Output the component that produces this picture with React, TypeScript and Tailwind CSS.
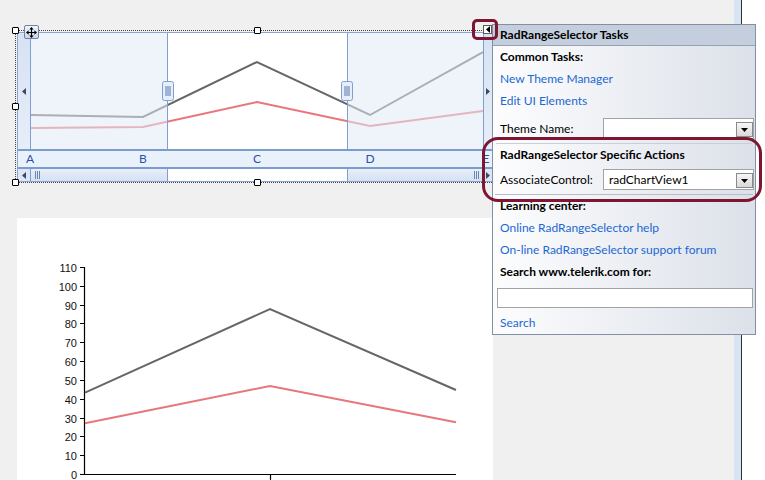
import React from 'react';

const LINK = 'text-[#1c68d4]';

function TriLeft({ color = '#3c4a66' }: { color?: string }) {
    return (
        <svg width="4" height="7" viewBox="0 0 4 7">
            <path d="M4 0V7L0 3.5Z" fill={color} />
        </svg>
    );
}

function TriRight({ color = '#3c4a66' }: { color?: string }) {
    return (
        <svg width="4" height="7" viewBox="0 0 4 7">
            <path d="M0 0V7L4 3.5Z" fill={color} />
        </svg>
    );
}

function Grip() {
    return (
        <svg width="7" height="8" viewBox="0 0 7 8">
            <path d="M1.5 0V8M3.5 0V8M5.5 0V8" stroke="#6d87b5" strokeWidth="1" />
        </svg>
    );
}

function Handle({ className }: { className: string }) {
    return <div className={`absolute w-[7px] h-[7px] bg-white border border-black rounded-[1px] ${className}`} />;
}

// plot area of the range selector, origin at page (31,33)
function RangePlot() {
    const gray = '-1,82 112,84 226,29 339,82 452,19';
    const pink = '-1,95 112,94 226,69 339,93 452,78';
    const grips = [131.5, 310.5];
    return (
        <svg width="452" height="116" viewBox="0 0 452 116" className="block shrink-0">
            <rect x="0" y="0" width="452" height="116" fill="#fff" />
            <polyline points={gray} fill="none" stroke="#666" strokeWidth="2" />
            <polyline points={pink} fill="none" stroke="#e8767b" strokeWidth="2" />
            <rect x="0" y="0" width="136" height="116" fill="#e1e9f5" opacity="0.55" />
            <rect x="317" y="0" width="135" height="116" fill="#e1e9f5" opacity="0.55" />
            <path d="M136.5 0V116M316.5 0V116" stroke="#7f9fd0" strokeWidth="1" />
            {grips.map(x => (
                <g key={x}>
                    <rect x={x} y="48.5" width="11" height="19" rx="2" fill="#e6eef9" stroke="#7f9fd0" />
                    <path
                        d={`M${x + 3.5} 53V63M${x + 5.5} 53V63M${x + 7.5} 53V63`}
                        stroke="#5a78b0"
                        strokeWidth="1"
                    />
                </g>
            ))}
        </svg>
    );
}

function RangeDesigner() {
    const labels = [
        { t: 'A', x: 12 },
        { t: 'B', x: 125 },
        { t: 'C', x: 239 },
        { t: 'D', x: 352 },
        { t: 'E', x: 468 },
    ];
    return (
        <div className="relative w-[481px] h-[153px] border border-dotted border-[#444] shrink-0">
            <div className="ml-[1px] mt-[1px] w-[476px] h-[150px] border border-[#8ca5d0] flex flex-col bg-white">
                {/* plot row */}
                <div className="h-[116px] flex shrink-0">
                    <div className="w-[13px] border-r border-[#7f9fd0] bg-gradient-to-b from-[#d6e2f3] to-[#e6eef9] flex items-center justify-center">
                        <TriLeft />
                    </div>
                    <RangePlot />
                    <div className="w-[9px] border-l border-[#7f9fd0] bg-gradient-to-b from-[#d6e2f3] to-[#e6eef9] flex items-center justify-center">
                        <TriRight />
                    </div>
                </div>
                {/* category band */}
                <div className="relative h-[20px] border-y-2 border-[#7c9ccf] bg-[#e9f1fb] shrink-0 text-[12px] text-[#2852b0]">
                    {labels.map(l => (
                        <span
                            key={l.t}
                            className="absolute top-0 h-full flex items-center -translate-x-1/2 leading-none"
                            style={{ left: l.x }}
                        >
                            {l.t}
                        </span>
                    ))}
                </div>
                {/* scroll bar */}
                <div className="h-[12px] flex shrink-0">
                    <div className="w-[13px] border-r border-[#7f9fd0] bg-[#dce6f4] flex items-center justify-center">
                        <TriLeft />
                    </div>
                    <div className="w-[136px] bg-gradient-to-b from-[#e8eff9] to-[#d4e1f2] flex items-center pl-[3px]">
                        <Grip />
                    </div>
                    <div className="w-[181px] border-x border-[#7f9fd0] bg-white" />
                    <div className="w-[135px] bg-gradient-to-b from-[#e8eff9] to-[#d4e1f2] flex items-center justify-end pr-[3px]">
                        <Grip />
                    </div>
                    <div className="w-[9px] border-l border-[#7f9fd0] bg-[#dce6f4] flex items-center justify-center">
                        <TriRight />
                    </div>
                </div>
            </div>

            <Handle className="left-[-4px] top-[-4px]" />
            <Handle className="left-[238px] top-[-4px]" />
            <Handle className="left-[-4px] top-[72px]" />
            <Handle className="left-[-4px] top-[148px]" />
            <Handle className="left-[238px] top-[148px]" />

            {/* move glyph */}
            <div className="absolute left-[8px] top-[-6px] w-[15px] h-[14px] border border-[#6f83a8] rounded-[2px] bg-gradient-to-b from-[#f2f6fb] to-[#c9d6ea] flex items-center justify-center">
                <svg width="11" height="11" viewBox="0 0 11 11">
                    <path d="M5.5 2V9M2 5.5H9" stroke="#000" strokeWidth="1.2" />
                    <path d="M5.5 0L3.3 2.6H7.7ZM5.5 11L3.3 8.4H7.7ZM0 5.5L2.6 3.3V7.7ZM11 5.5L8.4 3.3V7.7Z" fill="#000" />
                </svg>
            </div>
        </div>
    );
}

// chart surface, origin at page (17,218)
function ChartSurface() {
    const ticks = Array.from({ length: 12 }, (_, i) => i * 10);
    const yOf = (v: number) => 256 - v * 1.882;
    return (
        <div className="ml-[2px] mt-[35px] w-[476px] flex-1 bg-white">
            <svg width="476" height="262" viewBox="0 0 476 262" className="block">
                <path d="M67.5 49V256.5H439M253.5 256V262" fill="none" stroke="#000" strokeWidth="1.2" />
                {ticks.map(v => {
                    const y = Math.round(yOf(v)) + 0.5;
                    return (
                        <g key={v}>
                            <path d={`M63 ${y}H68`} stroke="#000" strokeWidth="1" />
                            <text
                                x="60"
                                y={y}
                                textAnchor="end"
                                dominantBaseline="central"
                                fontFamily="'Liberation Sans', Arial, sans-serif"
                                fontSize="11"
                                fill="#111"
                            >
                                {v}
                            </text>
                        </g>
                    );
                })}
                <polyline points="68,174.7 253,91 439,172" fill="none" stroke="#666" strokeWidth="2" />
                <polyline points="68,205.3 253,168 439,204.3" fill="none" stroke="#e8767b" strokeWidth="2" />
            </svg>
        </div>
    );
}

function Combo({ value }: { value?: string }) {
    return (
        <div className="w-[151px] h-[21px] border border-[#a3a3a3] bg-white flex justify-between pl-[5px] shrink-0">
            <span className="self-center leading-none">{value}</span>
            <div className="self-end mb-[1px] w-[17px] h-[15px] border border-[#8a8a8a] bg-gradient-to-b from-[#f7f7f7] to-[#d9d9d9] flex items-center justify-center">
                <svg width="7" height="4" viewBox="0 0 7 4">
                    <path d="M0 0H7L3.5 4Z" fill="#000" />
                </svg>
            </div>
        </div>
    );
}

function TasksPanel() {
    const row = 'h-[22px] flex items-center pl-[7px] shrink-0';
    return (
        <div className="absolute left-[492px] top-[24px] w-[264px] h-[311px] border border-[#8290a6] flex flex-col bg-gradient-to-r from-[#fdfdfe] to-[#dce1e9]">
            <div className="h-[21px] bg-[#c4cedc] border-b border-[#95a2b6] flex items-center pl-[7px] font-bold shrink-0">
                RadRangeSelector Tasks
            </div>
            <div className={`${row} font-bold`}>Common Tasks:</div>
            <div className={`${row} ${LINK}`}>New Theme Manager</div>
            <div className={`${row} ${LINK} h-[21px]`}>Edit UI Elements</div>
            <div className="mt-[6px] h-[21px] flex items-center justify-between pl-[7px] pr-[1px] shrink-0">
                <span>Theme Name:</span>
                <Combo />
            </div>
            <div className="mt-[4px] mx-[3px] border-t border-[#c9ced7] shrink-0" />
            <div className={`${row} h-[21px] font-bold`}>RadRangeSelector Specific Actions</div>
            <div className="mt-[3px] h-[21px] flex items-center justify-between pl-[7px] pr-[1px] shrink-0">
                <span>AssociateControl:</span>
                <Combo value="radChartView1" />
            </div>
            <div className="mt-[4px] mx-[2px] border-t border-[#b7bdc7] shrink-0" />
            <div className={`${row} font-bold`}>Learning center:</div>
            <div className={`${row} ${LINK}`}>Online RadRangeSelector help</div>
            <div className={`${row} ${LINK}`}>On-line RadRangeSelector support forum</div>
            <div className={`${row} font-bold`}>Search www.telerik.com for:</div>
            <div className="mt-[5px] ml-[4px] mr-[2px] h-[20px] border border-[#a3a3a3] bg-white shrink-0" />
            <div className={`${row} mt-[4px] ${LINK}`}>Search</div>
        </div>
    );
}

export default function App() {
    return (
        <div className="relative w-[765px] h-[480px] overflow-hidden flex bg-white font-['Lato',sans-serif] text-[12px] text-black">
            <div className="w-[734px] h-full bg-[#f0f0f0] flex flex-col pl-[15px] pt-[30px] shrink-0">
                <RangeDesigner />
                <ChartSurface />
            </div>
            <div className="w-[7px] h-full bg-[#d7e4f4] shrink-0" />
            <div className="w-[1px] h-full bg-[#2e2e2e] shrink-0" />
            <div className="flex-1 bg-white" />

            {/* smart tag glyph */}
            <div className="absolute left-[483px] top-[25px] w-[9px] h-[9px] border border-[#5a5a5a] bg-white flex items-center justify-center">
                <TriLeft color="#000" />
            </div>

            <TasksPanel />

            {/* callout marks */}
            <div className="absolute left-[472px] top-[19px] w-[26px] h-[21px] border-[3px] border-[#7e1631] rounded-[5px]" />
            <div className="absolute left-[482px] top-[137px] w-[280px] h-[65px] border-[3px] border-[#7e1631] rounded-[16px]" />
        </div>
    );
}
